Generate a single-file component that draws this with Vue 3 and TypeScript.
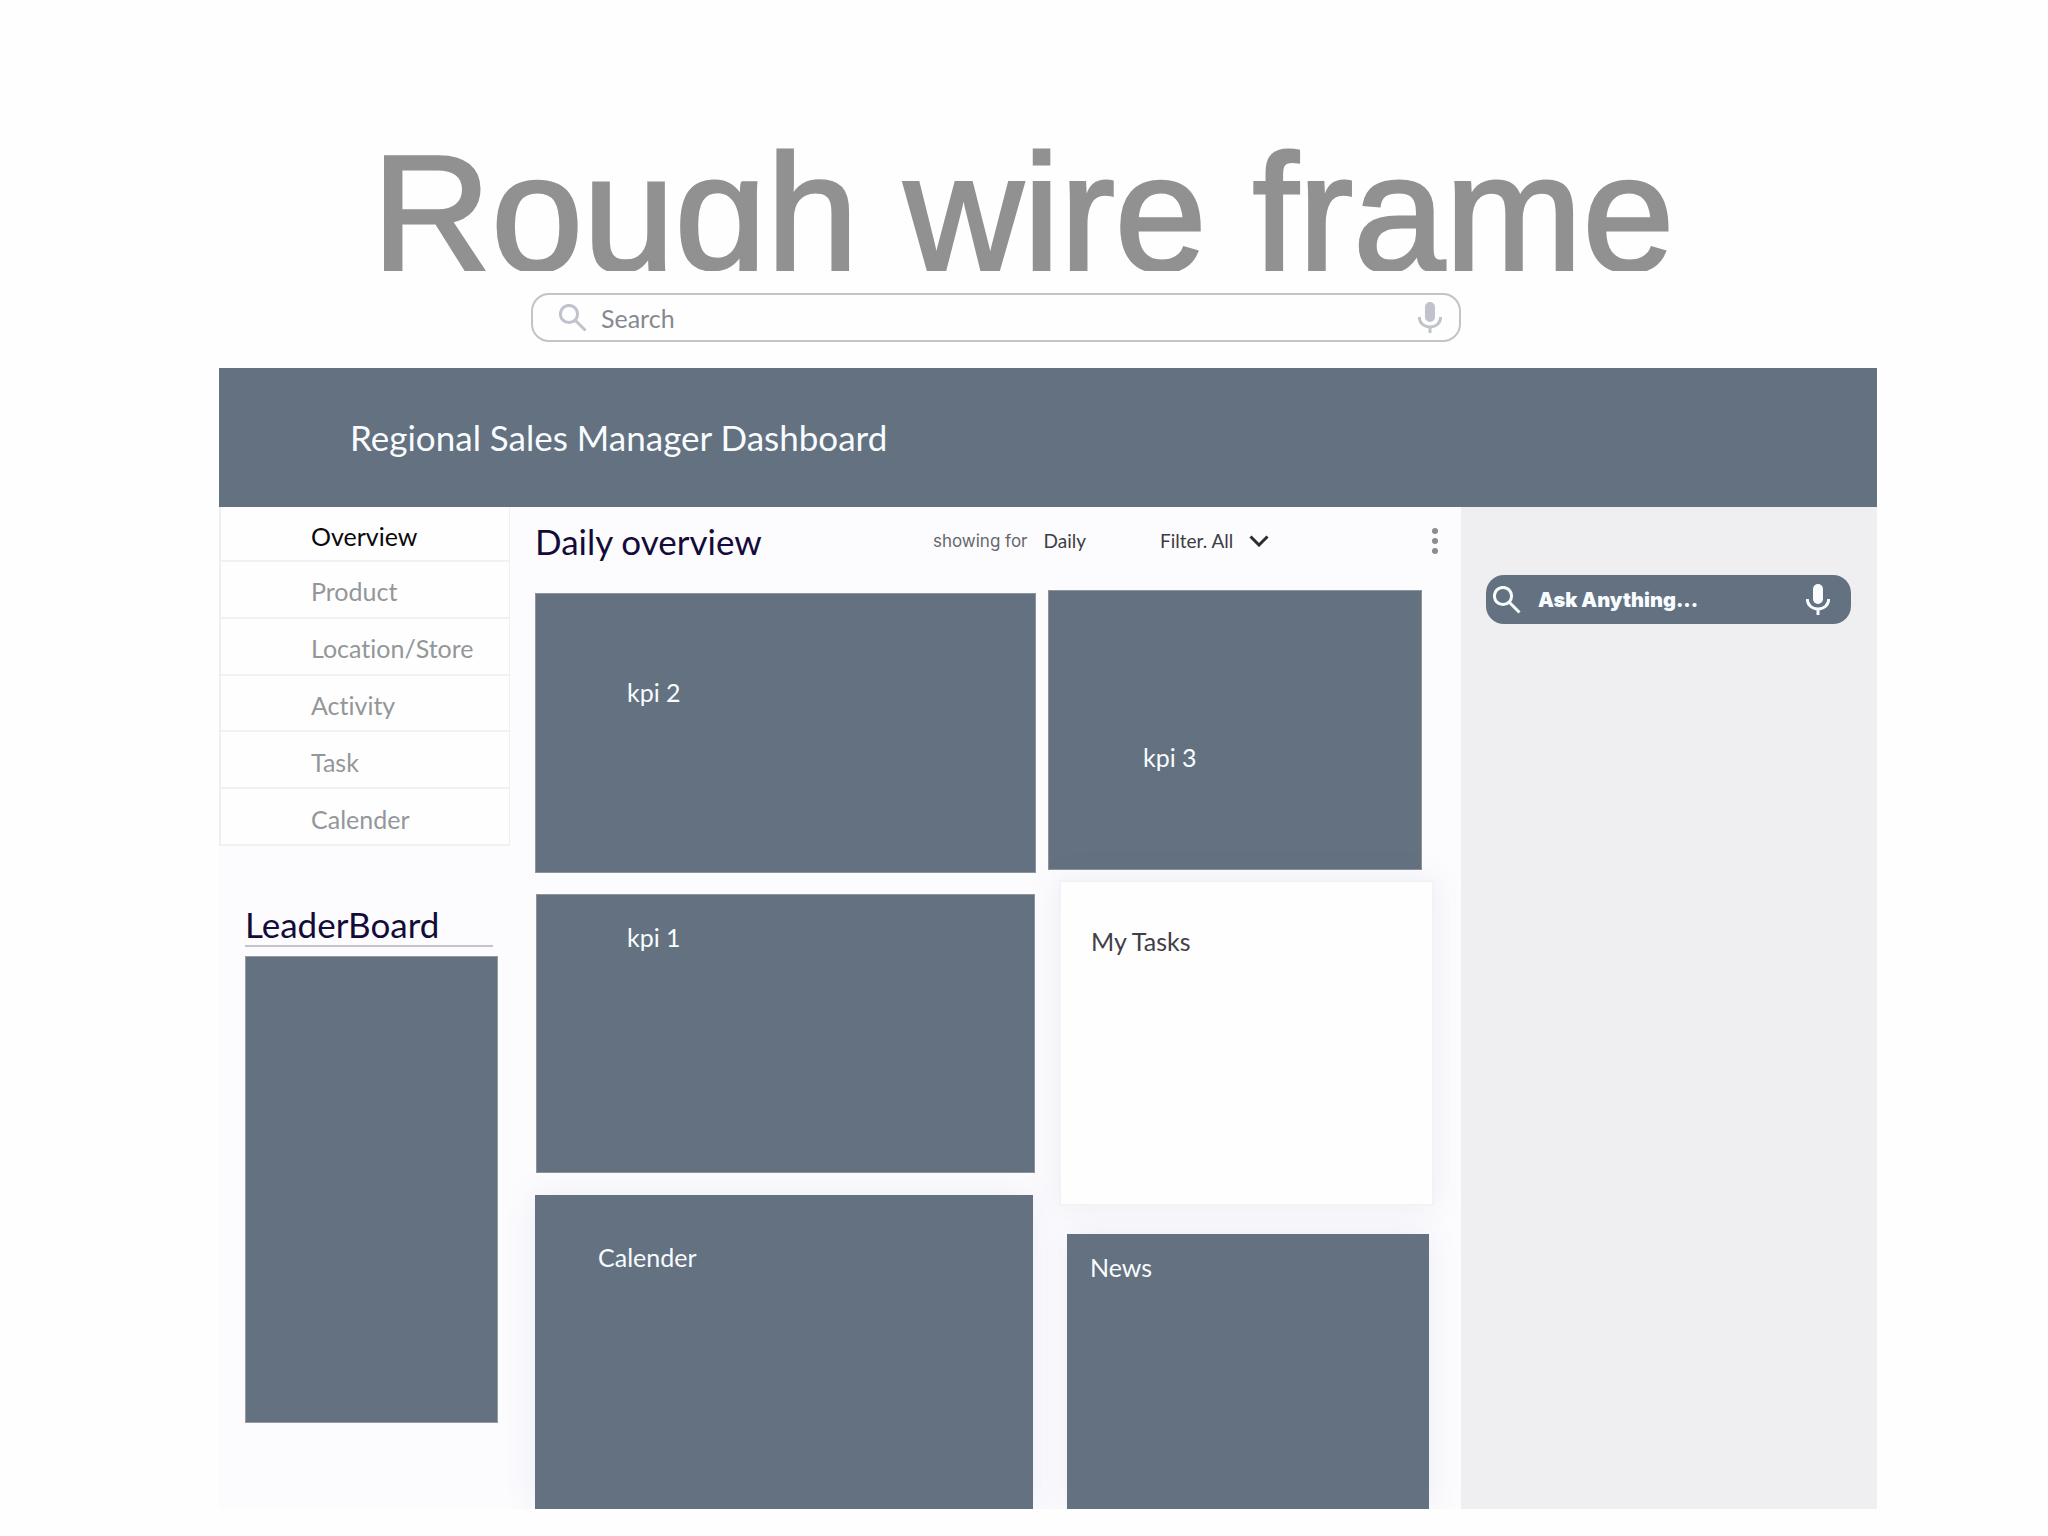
<script setup lang="ts">
import { ref } from 'vue'

const navItems: string[] = ['Overview', 'Product', 'Location/Store', 'Activity', 'Task', 'Calender']
const active = ref('Overview')
const search = ref('')
const question = ref('')
const filter = ref('all')
</script>

<template>
  <div class="page">
    <h1 class="title">Rough wire frame</h1>

    <form class="search" role="search" @submit.prevent>
      <svg class="search-icon" viewBox="0 0 28 28" aria-hidden="true">
        <circle cx="10" cy="10" r="8.6" />
        <path d="M16.5 16.5 L26.5 26.5" />
      </svg>
      <input v-model="search" class="search-input" type="text" placeholder="Search" aria-label="Search" />
      <button class="mic" type="button" aria-label="Voice search">
        <svg viewBox="0 0 24 32" aria-hidden="true">
          <rect x="7" y="0" width="10" height="20" rx="5" />
          <path d="M1.3 15 C1.3 21 6 25 12 25 C18 25 22.7 21 22.7 15 M12 25 V31" />
        </svg>
      </button>
    </form>

    <div class="dashboard">
      <header class="banner">
        <h2 class="banner-title">Regional Sales Manager Dashboard</h2>
      </header>

      <div class="body">
        <aside class="sidebar">
          <nav class="nav" aria-label="Sections">
            <a
              v-for="item in navItems"
              :key="item"
              href="#"
              class="nav-link"
              :class="{ current: item === active }"
              @click.prevent="active = item"
            >{{ item }}</a>
          </nav>
          <section class="leaderboard">
            <h2 class="heading leaderboard-title">LeaderBoard</h2>
            <div class="leaderboard-panel"></div>
          </section>
        </aside>

        <main class="main">
          <div class="toolbar">
            <h2 class="heading">Daily overview</h2>
            <div class="period">
              <span class="period-label">showing for</span>
              <button class="period-value" type="button">Daily</button>
            </div>
            <div class="filter">
              <select v-model="filter" class="filter-select" aria-label="Filter">
                <option value="all">Filter. All</option>
              </select>
              <svg class="chevron" viewBox="0 0 20 12" aria-hidden="true">
                <path d="M1.5 1.5 L10 10 L18.5 1.5" />
              </svg>
            </div>
            <button class="more" type="button" aria-label="More options">
              <svg viewBox="0 0 6 28" aria-hidden="true">
                <circle cx="3" cy="4" r="3" />
                <circle cx="3" cy="14" r="3" />
                <circle cx="3" cy="24" r="3" />
              </svg>
            </button>
          </div>

          <div class="boards">
            <div class="column column-wide">
              <article class="card kpi-two"><h3>kpi 2</h3></article>
              <article class="card kpi-one"><h3>kpi 1</h3></article>
              <article class="card calender"><h3>Calender</h3></article>
            </div>
            <div class="column">
              <article class="card kpi-three"><h3>kpi 3</h3></article>
              <article class="card tasks"><h3>My Tasks</h3></article>
              <article class="card news"><h3>News</h3></article>
            </div>
          </div>
        </main>

        <aside class="assistant">
          <form class="ask" @submit.prevent>
            <svg class="search-icon" viewBox="0 0 28 28" aria-hidden="true">
              <circle cx="10" cy="10" r="8.6" />
              <path d="M16.5 16.5 L26.5 26.5" />
            </svg>
            <input v-model="question" class="ask-input" type="text" placeholder="Ask Anything..." aria-label="Ask Anything" />
            <button class="mic" type="button" aria-label="Ask by voice">
              <svg viewBox="0 0 24 32" aria-hidden="true">
                <rect x="7" y="0" width="10" height="20" rx="5" />
                <path d="M1.3 15 C1.3 21 6 25 12 25 C18 25 22.7 21 22.7 15 M12 25 V31" />
              </svg>
            </button>
          </form>
        </aside>
      </div>
    </div>
  </div>
</template>

<style>
body {
  margin: 0;
  background: #fefefe;
}
</style>

<style scoped>
.page {
  --slate: #637180;
  padding: 128px 171px 27px 219px;
  font-family: Lato, "Open Sans", sans-serif;
  font-size: 25px;
  font-variant-ligatures: none;
  line-height: 32px;
}

.page * {
  box-sizing: border-box;
}

h1,
h2,
h3 {
  margin: 0;
  font-weight: 400;
}

button,
input,
select {
  padding: 0;
  border: 0;
  background: none;
  font: inherit;
  color: inherit;
}

.title {
  height: 143px;
  overflow: hidden;
  padding-left: 153px;
  font-family: "Liberation Sans", Arial, sans-serif;
  font-size: 165px;
  line-height: 170px;
  white-space: nowrap;
  color: #919191;
  -webkit-text-stroke: 3px #919191;
}

.search {
  display: flex;
  align-items: center;
  height: 49px;
  margin: 22px 416px 26px 312px;
  padding: 0 17px 0 26px;
  border: 2px solid #c3c3c8;
  border-radius: 18px;
  color: #c0c2cc;
}

.search-icon {
  flex: none;
  width: 28px;
  height: 28px;
  fill: none;
  stroke: currentColor;
  stroke-width: 3;
}

.search-input,
.ask-input {
  flex: 1;
  min-width: 0;
  height: 32px;
  margin-left: 14px;
  outline: none;
}

.search-input {
  color: #858a90;
}

.search-input::placeholder,
.ask-input::placeholder {
  color: inherit;
  opacity: 1;
}

.mic {
  flex: none;
  width: 24px;
  height: 32px;
}

.mic svg {
  display: block;
  fill: currentColor;
}

.mic path {
  fill: none;
  stroke: currentColor;
  stroke-width: 3;
}

.dashboard {
  overflow: hidden;
  background: #fcfcfe;
}

.banner {
  display: flex;
  align-items: center;
  height: 139px;
  padding: 0 0 2px 131px;
  background: var(--slate);
}

.banner-title {
  font-size: 35px;
  line-height: 40px;
  color: #f8fcff;
}

.body {
  display: grid;
  grid-template-columns: 291px 1fr 416px;
}

.nav {
  display: grid;
  grid-template-rows: 55px repeat(5, 1fr);
  height: 339px;
  border: solid #f1eef2;
  border-width: 0 1px 0 2px;
  background: #fefefe;
}

.nav-link {
  display: flex;
  align-items: center;
  padding: 4px 0 0 90px;
  border-bottom: 2px solid #f3f0f3;
  color: #93979a;
  text-decoration: none;
}

.nav-link.current {
  color: #0a0a0a;
}

.leaderboard {
  padding: 58px 12px 0 26px;
}

.heading {
  font-size: 35px;
  line-height: 40px;
  color: #140c38;
}

.leaderboard-title {
  margin-right: 5px;
  padding-bottom: 1px;
  border-bottom: 2px solid #c4c3c9;
}

.leaderboard-panel {
  height: 467px;
  margin-top: 9px;
  border: 1px solid #98999b;
  background: var(--slate);
}

.main {
  padding: 0 23px 0 25px;
}

.toolbar {
  display: flex;
  align-items: center;
  height: 68px;
  margin-bottom: 15px;
}

.period {
  display: flex;
  align-items: center;
  gap: 16px;
  margin-left: auto;
  font-size: 19px;
  color: #3c3c42;
}

.period-label {
  font-family: Inter, sans-serif;
  font-size: 17px;
  color: #66666b;
}

.filter {
  display: flex;
  align-items: center;
  gap: 15px;
  margin-left: 74px;
  font-size: 19px;
  color: #3c3c42;
}

.filter-select {
  appearance: none;
}

.chevron {
  width: 20px;
  height: 12px;
  fill: none;
  stroke: #2c2c30;
  stroke-width: 3;
}

.more {
  width: 6px;
  height: 28px;
  margin-left: 163px;
}

.more svg {
  display: block;
  fill: #8c8c90;
}

.boards {
  display: grid;
  grid-template-columns: 1fr 390px;
  gap: 12px;
}

.column-wide {
  padding-top: 3px;
}

.card {
  border: 1px solid #8f9499;
  background: var(--slate);
  color: #f8fcff;
}

.card h3 {
  font-size: 25px;
}

.kpi-two {
  height: 280px;
  padding: 82px 91px 0;
}

.kpi-one {
  height: 279px;
  margin: 21px 1px 22px;
  padding: 26px 90px 0;
}

.calender,
.news {
  border: 0;
  box-shadow: 0 0 30px rgba(90, 100, 190, 0.1);
}

.calender {
  height: 314px;
  margin-right: 3px;
  padding: 46px 63px 0;
}

.kpi-three {
  height: 280px;
  margin-right: 16px;
  padding: 150px 94px 0;
}

.tasks {
  height: 326px;
  margin: 10px 4px 28px 11px;
  padding: 43px 30px 0;
  border: 2px solid #f3f3f5;
  background: #fefefe;
  color: #404048;
  box-shadow: 0 0 30px rgba(90, 100, 160, 0.1);
}

.news {
  height: 275px;
  margin: 0 9px 0 19px;
  padding: 17px 23px 0;
}

.assistant {
  padding: 68px 26px 0 25px;
  background: #efeff1;
}

.ask {
  display: flex;
  align-items: center;
  height: 49px;
  padding: 0 21px 0 7px;
  border-radius: 18px;
  background: var(--slate);
  color: #f8fcff;
}

.ask-input {
  margin-left: 17px;
  font-family: Inter, sans-serif;
  font-size: 20px;
  font-weight: 900;
}
</style>
